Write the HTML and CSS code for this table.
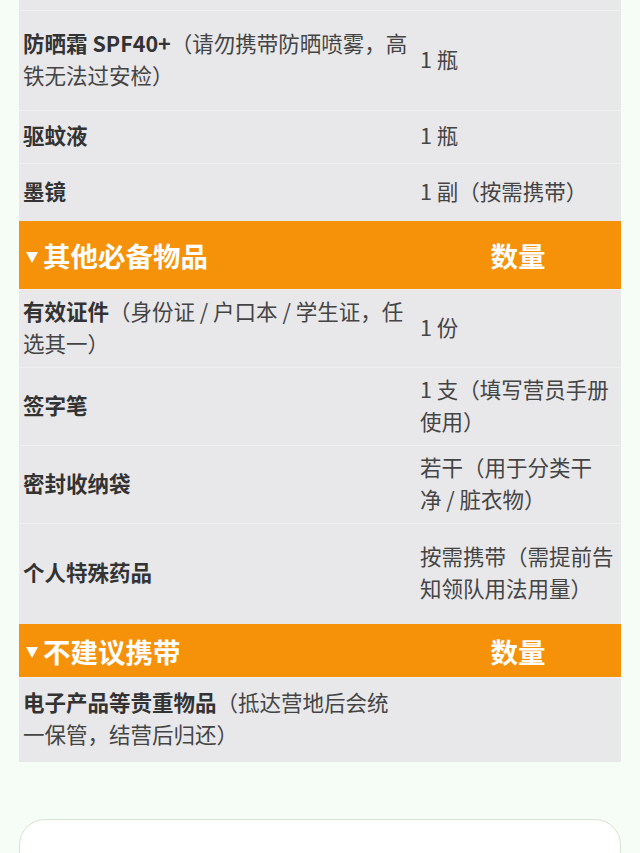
FILE: index.html
```html
<!DOCTYPE html>
<html lang="zh">
<head>
<meta charset="utf-8">
<link rel="stylesheet" href="styles.css">
</head>
<body>
<div class="page">
  <div class="list">
    <div class="row cut"></div>
    <div class="row h100">
      <div class="item"><b>防晒霜 SPF40+</b>（请勿携带防晒喷雾，高<br>铁无法过安检）</div>
      <div class="qty">1 瓶</div>
    </div>
    <div class="row h53">
      <div class="item"><b>驱蚊液</b></div>
      <div class="qty">1 瓶</div>
    </div>
    <div class="row h58">
      <div class="item"><b>墨镜</b></div>
      <div class="qty">1 副（按需携带）</div>
    </div>
    <div class="head h68">
      <div class="head-title"><span class="tri"></span>其他必备物品</div>
      <div class="head-qty">数量</div>
    </div>
    <div class="row h78">
      <div class="item"><b>有效证件</b>（身份证 / 户口本 / 学生证，任<br>选其一）</div>
      <div class="qty">1 份</div>
    </div>
    <div class="row h78">
      <div class="item"><b>签字笔</b></div>
      <div class="qty">1 支（填写营员手册<br>使用）</div>
    </div>
    <div class="row h78">
      <div class="item"><b>密封收纳袋</b></div>
      <div class="qty">若干（用于分类干<br>净 / 脏衣物）</div>
    </div>
    <div class="row h101">
      <div class="item"><b>个人特殊药品</b></div>
      <div class="qty">按需携带（需提前告<br>知领队用法用量）</div>
    </div>
    <div class="head h53">
      <div class="head-title"><span class="tri"></span>不建议携带</div>
      <div class="head-qty">数量</div>
    </div>
    <div class="row h85">
      <div class="item"><b>电子产品等贵重物品</b>（抵达营地后会统<br>一保管，结营后归还）</div>
      <div class="qty"></div>
    </div>
  </div>
  <div class="card"></div>
</div>
</body>
</html>
```

FILE: styles.css
```css
html, body {
  margin: 0;
  padding: 0;
  background: #f6fcf6;
}
body {
  font-family: "Noto Sans CJK SC", "Noto Sans", sans-serif;
  color: #444444;
}
.page {
  padding: 0 19px;
}
.list {
  display: flex;
  flex-direction: column;
}
.row {
  display: grid;
  grid-template-columns: 396px 1fr;
  align-items: center;
  background: #e8e8ea;
  border-top: 1px solid #f0f0f2;
  box-sizing: border-box;
  padding-bottom: 4px;
  font-size: 21.5px;
  line-height: 32px;
}
.row.cut {
  height: 10px;
  border-top: none;
  padding-bottom: 0;
}
.item {
  padding: 0 2px 0 4px;
}
.item b {
  font-weight: 700;
  color: #333333;
}
.qty {
  padding: 0 0 0 5px;
}
.head {
  display: grid;
  grid-template-columns: 396px 1fr;
  align-items: center;
  background: #f5920a;
  color: #ffffff;
  font-size: 27.5px;
  font-weight: 700;
  box-sizing: border-box;
}
.head-title {
  padding-left: 7px;
  display: flex;
  align-items: center;
  gap: 5px;
}
.tri {
  width: 0;
  height: 0;
  border-left: 6.5px solid transparent;
  border-right: 6.5px solid transparent;
  border-top: 11px solid #ffffff;
  margin-top: 4px;
}
.head-qty {
  text-align: center;
}
.h53 { height: 53px; }
.h58 { height: 58px; }
.h68 { height: 68px; }
.h78 { height: 78px; }
.h85 { height: 85px; }
.h100 { height: 100px; }
.h101 { height: 101px; }
.card {
  margin-top: 57px;
  height: 120px;
  background: #ffffff;
  border: 1px solid #d6e4d6;
  border-radius: 26px;
}
```
